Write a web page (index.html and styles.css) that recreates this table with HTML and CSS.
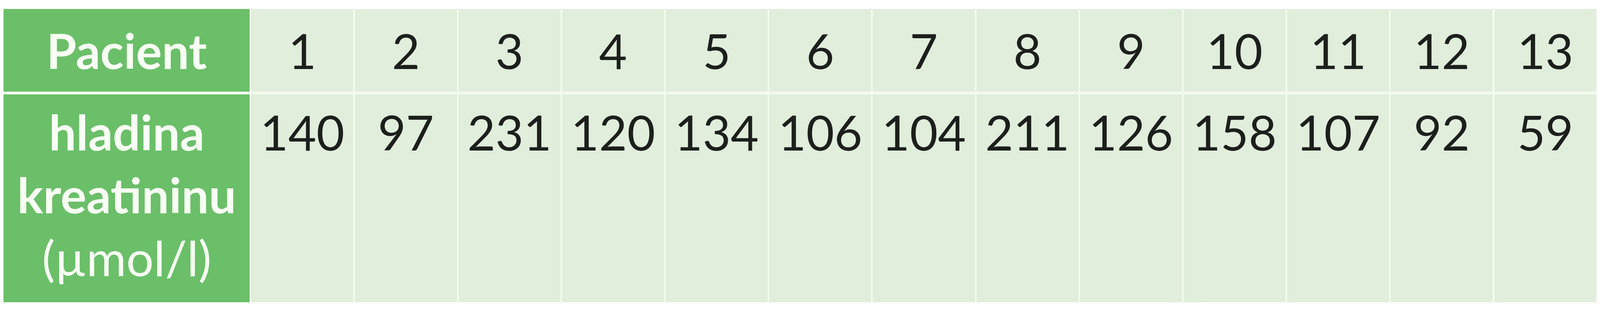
FILE: index.html
```html
<!DOCTYPE html>
<html lang="cs">
<head>
<meta charset="utf-8">
<title>Hladina kreatininu</title>
<link rel="stylesheet" href="styles.css">
</head>
<body>
<div class="table">
  <div class="cell head row1">Pacient</div>
  <div class="cell num row1">1</div>
  <div class="cell num row1">2</div>
  <div class="cell num row1">3</div>
  <div class="cell num row1">4</div>
  <div class="cell num row1">5</div>
  <div class="cell num row1">6</div>
  <div class="cell num row1">7</div>
  <div class="cell num row1">8</div>
  <div class="cell num row1">9</div>
  <div class="cell num row1">10</div>
  <div class="cell num row1">11</div>
  <div class="cell num row1">12</div>
  <div class="cell num row1">13</div>

  <div class="cell head row2"><span class="b">hladina</span><span class="b">kreatininu</span><span class="unit">(µmol/l)</span></div>
  <div class="cell num row2">140</div>
  <div class="cell num row2">97</div>
  <div class="cell num row2">231</div>
  <div class="cell num row2">120</div>
  <div class="cell num row2">134</div>
  <div class="cell num row2">106</div>
  <div class="cell num row2">104</div>
  <div class="cell num row2">211</div>
  <div class="cell num row2">126</div>
  <div class="cell num row2">158</div>
  <div class="cell num row2">107</div>
  <div class="cell num row2">92</div>
  <div class="cell num row2">59</div>
</div>
</body>
</html>
```
FILE: styles.css
```css
html, body {
  margin: 0;
  padding: 0;
  background: #ffffff;
}

body {
  font-family: "Lato", "Liberation Sans", sans-serif;
  font-size: 124px;
  line-height: 161px;
}

/* horizontal measures are fractions of the 6990px-wide frame,
   so the table keeps its proportions in any window width */
.table {
  margin: 23px 0 0 0.2289vw;
  width: 99.542vw;
  display: grid;
  grid-template-columns: 15.379vw repeat(13, minmax(0, 1fr));
  grid-template-rows: 212px 533px;
  column-gap: 0.1vw;
  row-gap: 7px;
  background: #f3fbee;
}

.cell {
  display: flex;
  flex-direction: column;
  align-items: center;
  text-align: center;
  white-space: nowrap;
  min-width: 0;
}

.head {
  background: #6bbf69;
  color: #f8fff4;
  font-weight: 700;
}

.num {
  background: #e0eedb;
  color: #1c1f1c;
  font-weight: 400;
}

.row1 {
  justify-content: center;
}

.row2 {
  justify-content: flex-start;
  padding-top: 16px;
}

.unit {
  font-weight: 400;
}
```
